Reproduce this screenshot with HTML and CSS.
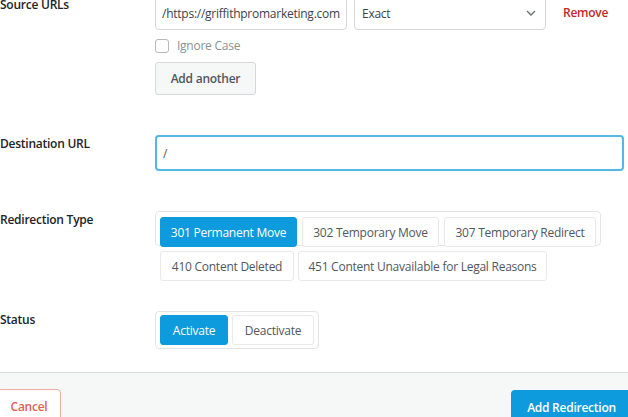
FILE: index.html
```html
<!DOCTYPE html>
<html lang="en">
<head>
    <meta charset="UTF-8">
    <meta name="viewport" content="width=device-width, initial-scale=1.0">
    <title>Add Redirection</title>
    <link rel="stylesheet" href="styles.css">
</head>
<body>
    <div class="form">
        <div class="row">
            <div class="label">Source URLs</div>
            <div class="field">
                <div class="source-line">
                    <input class="input source" type="text" value="/https://griffithpromarketing.com/">
                    <div class="select">
                        <span>Exact</span>
                        <svg width="12" height="8" viewBox="0 0 12 8"><path d="M2 2l4 4 4-4" fill="none" stroke="#6b7075" stroke-width="1.4"/></svg>
                    </div>
                    <a class="remove">Remove</a>
                </div>
                <label class="check"><span class="box"></span>Ignore Case</label>
                <button class="btn-plain">Add another</button>
            </div>
        </div>

        <div class="row dest-row">
            <div class="label">Destination URL</div>
            <div class="field">
                <input class="input dest" type="text" value="/">
            </div>
        </div>

        <div class="row type-row">
            <div class="label">Redirection Type</div>
            <div class="field">
                <div class="btn-group types">
                    <button class="opt active">301 Permanent Move</button>
                    <button class="opt">302 Temporary Move</button>
                    <button class="opt">307 Temporary Redirect</button>
                    <button class="opt">410 Content Deleted</button>
                    <button class="opt">451 Content Unavailable for Legal Reasons</button>
                </div>
            </div>
        </div>

        <div class="row status-row">
            <div class="label">Status</div>
            <div class="field">
                <div class="btn-group status">
                    <button class="opt active">Activate</button>
                    <button class="opt">Deactivate</button>
                </div>
            </div>
        </div>
    </div>

    <div class="footer">
        <button class="btn-cancel">Cancel</button>
        <button class="btn-primary">Add Redirection</button>
    </div>
</body>
</html>
```

FILE: styles.css
```css
body {
    margin: 0;
    font-family: "Open Sans", "Noto Sans", sans-serif;
    font-size: 12px;
    letter-spacing: -0.25px;
    color: #1d2327;
    background: #fff;
    overflow: hidden;
    width: 628px;
    height: 417px;
}

.form {
    margin-top: -4px;
}

.row {
    display: flex;
}

.label {
    width: 155px;
    flex-shrink: 0;
    font-weight: 600;
    line-height: 17px;
    white-space: nowrap;
}

.field {
    flex: 1;
    display: flex;
    flex-direction: column;
    align-items: flex-start;
}

.source-line {
    display: flex;
    align-items: center;
    gap: 7px;
}

.input {
    box-sizing: border-box;
    height: 34px;
    border: 1px solid #d5d7da;
    border-radius: 4px;
    padding: 0 6px;
    font-family: inherit;
    font-size: 12px;
    letter-spacing: -0.25px;
    color: #3c434a;
    background: #fff;
    outline: none;
}

.input.source {
    width: 192px;
}

.select {
    box-sizing: border-box;
    width: 192px;
    height: 34px;
    border: 1px solid #d5d7da;
    border-radius: 4px;
    padding: 0 8px 0 7px;
    display: flex;
    align-items: center;
    justify-content: space-between;
    color: #3c434a;
}

.remove {
    margin-left: 10px;
    color: #c3272b;
    font-weight: 600;
    margin-top: -2px;
}

.check {
    display: flex;
    align-items: center;
    gap: 8px;
    margin-top: 9px;
    color: #8c8f94;
    line-height: 14px;
}

.box {
    box-sizing: border-box;
    width: 14px;
    height: 14px;
    border: 1px solid #b5b8bc;
    border-radius: 3px;
}

.btn-plain {
    margin-top: 9px;
    box-sizing: border-box;
    width: 101px;
    height: 33px;
    border: 1px solid #d5d7da;
    border-radius: 3px;
    background: #f6f7f7;
    font-family: inherit;
    font-size: 12px;
    letter-spacing: -0.25px;
    font-weight: 600;
    color: #50575e;
}

.dest-row {
    margin-top: 40px;
}

.input.dest {
    width: 469px;
    height: 36px;
    border: 2px solid #55b6e8;
    padding: 0 6px;
    color: #50575e;
}

.type-row {
    margin-top: 40px;
}

.btn-group {
    box-sizing: border-box;
    border: 1px solid #e3e4e6;
    border-radius: 4px;
    display: flex;
    flex-wrap: wrap;
}

.types {
    width: 446px;
    height: 35px;
    padding: 5px 4px 0;
    gap: 4px 5px;
}

.opt {
    box-sizing: border-box;
    height: 30px;
    padding: 0;
    border: 1px solid #e8e9eb;
    border-radius: 3px;
    background: #fff;
    font-family: inherit;
    font-size: 12px;
    letter-spacing: -0.25px;
    color: #50575e;
    white-space: nowrap;
}

.opt.active {
    background: #0e9bdd;
    border-color: #0e9bdd;
    color: #fff;
}

.types .opt:nth-child(1),
.types .opt:nth-child(2) {
    width: 137px;
}

.types .opt:nth-child(3) {
    width: 152px;
}

.types .opt:nth-child(4) {
    width: 134px;
}

.types .opt:nth-child(5) {
    width: 249px;
    margin-left: -1px;
}

.status-row {
    margin-top: 65px;
}

.status {
    padding: 3px 4px;
    gap: 4px;
}

.status .opt:nth-child(1) {
    width: 68px;
}

.status .opt:nth-child(2) {
    width: 82px;
}

.footer {
    margin-top: 23px;
    border-top: 1px solid #dcdcde;
    background: #f6f7f7;
    height: 60px;
    display: flex;
    justify-content: space-between;
    align-items: flex-start;
    padding-top: 16px;
    margin-left: -3px;
    margin-right: -4px;
}

.btn-cancel {
    height: 34px;
    width: 64px;
    border: 1px solid #f0ada2;
    border-radius: 4px;
    background: #fff;
    color: #e2624f;
    font-family: inherit;
    font-size: 12px;
    letter-spacing: -0.25px;
    font-weight: 600;
}

.btn-primary {
    margin-top: 1px;
    height: 34px;
    width: 121px;
    border: none;
    border-radius: 4px;
    background: #0e9bdd;
    color: #fff;
    font-family: inherit;
    font-size: 12px;
    letter-spacing: -0.25px;
    font-weight: 600;
}
```
